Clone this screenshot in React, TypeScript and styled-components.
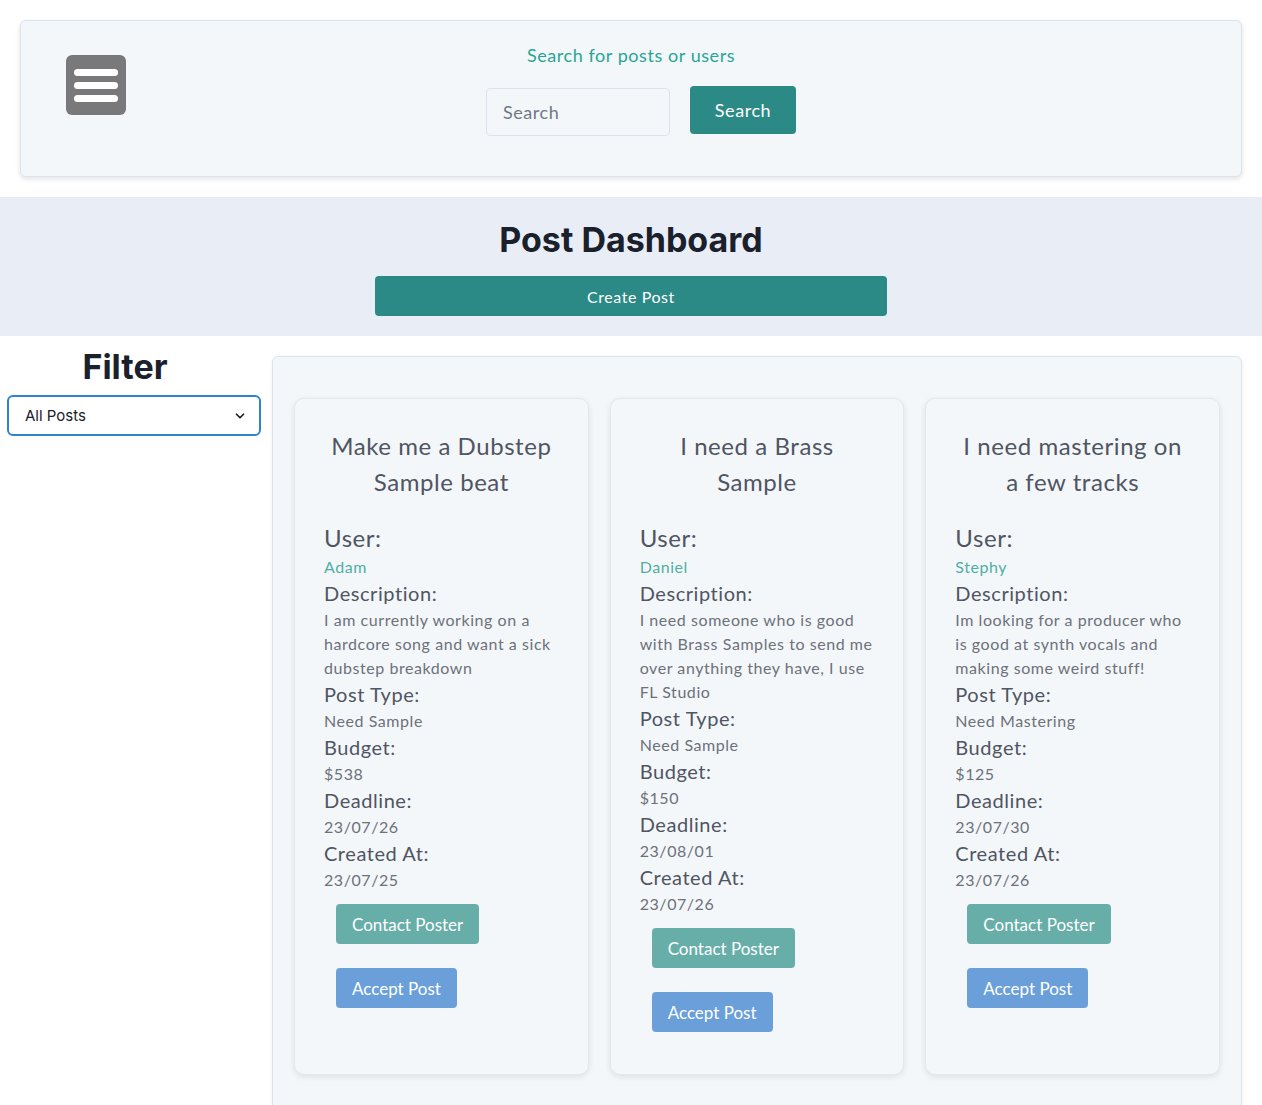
import styled, { createGlobalStyle } from "styled-components";

const GlobalStyle = createGlobalStyle`
  body {
    margin: 0;
    background: #ffffff;
    font-family: "Lato", "Liberation Sans", sans-serif;
    letter-spacing: 0.035em;
    color: #4a5568;
  }
  * { box-sizing: border-box; }
`;

type Post = {
  title: string;
  user: string;
  description: string;
  postType: string;
  budget: string;
  deadline: string;
  createdAt: string;
};

const posts: Post[] = [
  {
    title: "Make me a Dubstep Sample beat",
    user: "Adam",
    description: "I am currently working on a hardcore song and want a sick dubstep breakdown",
    postType: "Need Sample",
    budget: "$538",
    deadline: "23/07/26",
    createdAt: "23/07/25",
  },
  {
    title: "I need a Brass Sample",
    user: "Daniel",
    description: "I need someone who is good with Brass Samples to send me over anything they have, I use FL Studio",
    postType: "Need Sample",
    budget: "$150",
    deadline: "23/08/01",
    createdAt: "23/07/26",
  },
  {
    title: "I need mastering on a few tracks",
    user: "Stephy",
    description: "Im looking for a producer who is good at synth vocals and making some weird stuff!",
    postType: "Need Mastering",
    budget: "$125",
    deadline: "23/07/30",
    createdAt: "23/07/26",
  },
];

export default function App() {
  return (
    <>
      <GlobalStyle />
      <Header>
        <MenuButton aria-label="menu">
          <Bar />
          <Bar />
          <Bar />
        </MenuButton>
        <SearchArea>
          <SearchLabel>Search for posts or users</SearchLabel>
          <SearchRow>
            <SearchInput placeholder="Search" />
            <SearchButton>Search</SearchButton>
          </SearchRow>
        </SearchArea>
        <div />
      </Header>

      <Hero>
        <PageTitle>Post Dashboard</PageTitle>
        <CreateButton>Create Post</CreateButton>
      </Hero>

      <Content>
        <Sidebar>
          <FilterTitle>Filter</FilterTitle>
          <SelectBox>
            <span>All Posts</span>
            <svg width="14" height="14" viewBox="0 0 24 24" fill="none" stroke="#1a202c" strokeWidth="3" strokeLinecap="round" strokeLinejoin="round">
              <path d="M6 9l6 6 6-6" />
            </svg>
          </SelectBox>
        </Sidebar>

        <Panel>
          {posts.map((p) => (
            <Card key={p.title}>
              <CardTitle>{p.title}</CardTitle>
              <UserLabel>User:</UserLabel>
              <UserName>{p.user}</UserName>
              <Label>Description:</Label>
              <Value>{p.description}</Value>
              <Label>Post Type:</Label>
              <Value>{p.postType}</Value>
              <Label>Budget:</Label>
              <Value>{p.budget}</Value>
              <Label>Deadline:</Label>
              <Value>{p.deadline}</Value>
              <Label>Created At:</Label>
              <Value>{p.createdAt}</Value>
              <ActionButton $variant="contact">Contact Poster</ActionButton>
              <ActionButton $variant="accept">Accept Post</ActionButton>
            </Card>
          ))}
        </Panel>
      </Content>
    </>
  );
}

const Header = styled.header`
  margin: 20px 20px 0;
  height: 157px;
  display: grid;
  grid-template-columns: 1fr auto 1fr;
  align-items: start;
  padding: 23px 45px 0;
  background: #f4f7fa;
  border: 1px solid #dde3ee;
  border-radius: 6px;
  box-shadow: 0 2px 5px rgba(0, 0, 0, 0.12);
`;

const MenuButton = styled.div`
  width: 60px;
  height: 60px;
  margin-top: 11px;
  background: #79797b;
  border-radius: 6px;
  display: flex;
  flex-direction: column;
  justify-content: center;
  align-items: center;
  gap: 6px;
`;

const Bar = styled.span`
  display: block;
  width: 44px;
  height: 7px;
  border-radius: 4px;
  background: #ffffff;
`;

const SearchArea = styled.div`
  display: flex;
  flex-direction: column;
  align-items: center;
`;

const SearchLabel = styled.div`
  color: #26a597;
  font-size: 18px;
  line-height: 22px;
  margin-bottom: 20px;
`;

const SearchRow = styled.div`
  display: flex;
  align-items: flex-start;
  gap: 20px;
  padding-left: 20px;
`;

const SearchInput = styled.input`
  width: 184px;
  height: 48px;
  margin-top: 2px;
  padding: 0 16px;
  background: #f4f7fa;
  border: 1px solid #dde3ee;
  border-radius: 4px;
  font-family: inherit;
  letter-spacing: inherit;
  font-size: 18px;
  color: #4a5568;
  outline: none;
  &::placeholder {
    color: #6f7785;
  }
`;

const SearchButton = styled.button`
  width: 106px;
  height: 48px;
  background: #2c8a86;
  color: #ffffff;
  border: none;
  border-radius: 4px;
  font-family: inherit;
  letter-spacing: inherit;
  font-size: 18px;
`;

const Hero = styled.section`
  margin-top: 20px;
  background: #e9eef6;
  padding: 21px 0 20px;
  display: flex;
  flex-direction: column;
  align-items: center;
`;

const PageTitle = styled.h1`
  margin: 0 0 14px;
  font-family: "Inter", "Liberation Sans", sans-serif;
  font-weight: 700;
  font-size: 34px;
  line-height: 44px;
  letter-spacing: 0;
  color: #1a202c;
`;

const CreateButton = styled.button`
  width: 512px;
  height: 40px;
  background: #2c8a86;
  color: #ffffff;
  border: none;
  border-radius: 4px;
  font-family: inherit;
  letter-spacing: inherit;
  font-size: 16px;
`;

const Content = styled.div`
  display: flex;
  align-items: flex-start;
`;

const Sidebar = styled.aside`
  width: 265px;
  flex-shrink: 0;
  padding: 9px 5px 0 7px;
`;

const FilterTitle = styled.h2`
  margin: 0 0 6px;
  width: 236px;
  text-align: center;
  font-family: "Inter", "Liberation Sans", sans-serif;
  font-weight: 700;
  font-size: 34px;
  line-height: 44px;
  letter-spacing: 0;
  color: #1a202c;
`;

const SelectBox = styled.div`
  width: 254px;
  height: 41px;
  display: flex;
  align-items: center;
  justify-content: space-between;
  padding: 0 12px 0 16px;
  border: 2px solid #3182ce;
  border-radius: 6px;
  background: #ffffff;
  font-family: "Inter", "Liberation Sans", sans-serif;
  letter-spacing: 0;
  font-size: 15px;
  color: #1a202c;
`;

const Panel = styled.main`
  flex: 1;
  margin: 20px 20px 0 7px;
  padding: 41px 21px 40px;
  background: #f4f7fa;
  border: 1px solid #dde3ee;
  border-radius: 6px;
  box-shadow: 0 1px 4px rgba(0, 0, 0, 0.05);
  display: grid;
  grid-template-columns: repeat(3, 1fr);
  gap: 21px;
`;

const Card = styled.article`
  background: #f4f7fa;
  border: 1px solid #e3e8ef;
  border-radius: 10px;
  box-shadow: 0 2px 6px rgba(0, 0, 0, 0.09);
  padding: 29px 29px 30px;
  display: flex;
  flex-direction: column;
  align-items: flex-start;
`;

const CardTitle = styled.h3`
  align-self: stretch;
  margin: 0 0 21px;
  text-align: center;
  font-weight: 400;
  font-size: 24px;
  line-height: 36px;
  color: #4f5562;
`;

const UserLabel = styled.div`
  font-size: 24px;
  line-height: 34px;
  color: #4f5562;
`;

const UserName = styled.div`
  font-size: 16px;
  line-height: 24px;
  color: #4fafa5;
`;

const Label = styled.div`
  font-size: 20px;
  line-height: 29px;
  color: #4f5562;
`;

const Value = styled.div`
  font-size: 16px;
  line-height: 24px;
  color: #6c717a;
`;

const ActionButton = styled.button<{ $variant: "contact" | "accept" }>`
  margin: 12px;
  height: 40px;
  padding: 0 16px;
  border: none;
  border-radius: 4px;
  color: #ffffff;
  font-family: inherit;
  letter-spacing: 0;
  font-size: 17px;
  background: ${(p) => (p.$variant === "contact" ? "#67aea9" : "#6a9fd9")};
`;
